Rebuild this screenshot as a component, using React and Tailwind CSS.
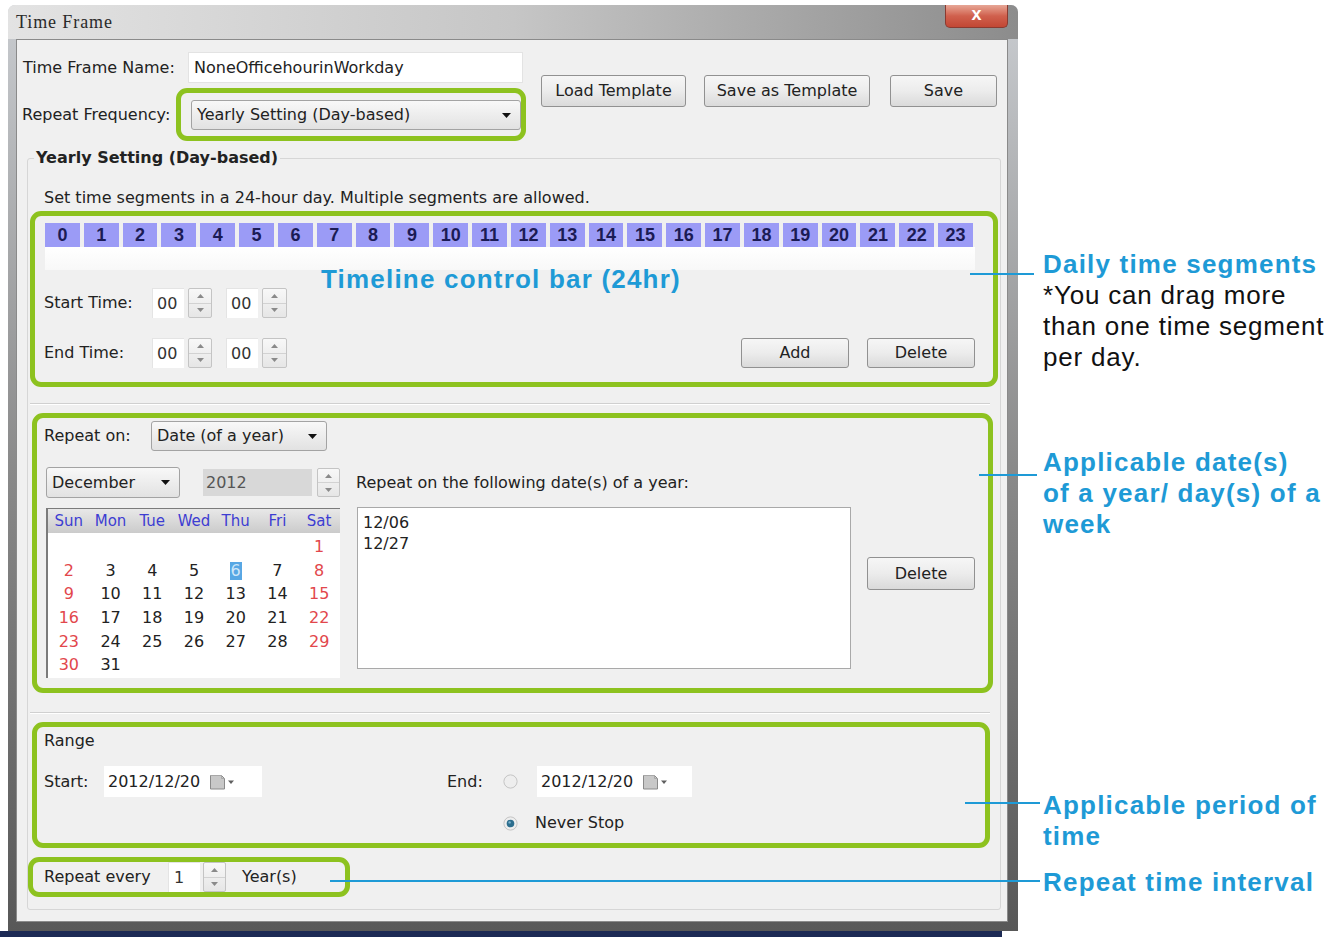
import React from "react";

const ui = "font-['DejaVu_Sans','Liberation_Sans',sans-serif]";
const arial = "font-['Liberation_Sans',Arial,sans-serif]";
const green = "rounded-[11px] border-[5px] border-[#8dc21f]";
const noteBlue = `${arial} text-[26px] font-bold tracking-[1.2px] text-[#1e9ad6]`;
const noteBlack = `${arial} text-[26px] tracking-[0.8px] text-[#111]`;

function Arrow({ up }) {
  return (
    <svg width="7" height="4" viewBox="0 0 7 4">
      <path d={up ? "M0 4L3.5 0L7 4Z" : "M0 0L7 0L3.5 4Z"} fill="#8a8a8a" />
    </svg>
  );
}

function Spinner({ className = "" }) {
  return (
    <div className={`flex flex-col rounded-[2px] border border-[#c4c4c4] bg-linear-to-b from-[#f8f8f8] to-[#e6e6e6] ${className}`}>
      <div className="flex flex-1 items-center justify-center border-b border-[#d2d2d2]">
        <Arrow up />
      </div>
      <div className="flex flex-1 items-center justify-center">
        <Arrow />
      </div>
    </div>
  );
}

function NumBox({ value, className = "" }) {
  return (
    <div className={`flex items-center border-l border-t border-[#e4e4e4] bg-white pl-[4px] text-[#333] ${className}`}>
      {value}
    </div>
  );
}

function Select({ label, className = "" }) {
  return (
    <div
      className={`flex items-center justify-between rounded-[3px] border border-[#a3a3a3] bg-linear-to-b from-[#f8f8f8] to-[#e2e2e2] pl-[5px] pr-[9px] text-[#222] ${className}`}
    >
      <span>{label}</span>
      <svg width="9" height="5" viewBox="0 0 9 5">
        <path d="M0 0H9L4.5 5Z" fill="#111" />
      </svg>
    </div>
  );
}

function Btn({ children, className = "" }) {
  return (
    <button
      type="button"
      className={`flex items-center justify-center rounded-[3px] border border-[#919191] bg-linear-to-b from-[#f6f6f6] via-[#ececec] to-[#dadada] text-[#222] ${className}`}
    >
      {children}
    </button>
  );
}

function Radio({ checked, className = "" }) {
  return (
    <svg className={className} width="15" height="15" viewBox="0 0 15 15">
      <circle cx="7.5" cy="7.5" r="6.6" fill="#eeeeee" stroke="#c4c4c4" />
      {checked && <circle cx="7.5" cy="7.5" r="3.8" fill="#2c6e8e" />}
      {checked && <circle cx="6.6" cy="6.4" r="1.2" fill="#7fb4cf" />}
    </svg>
  );
}

function DateField({ className = "" }) {
  return (
    <div className={`flex h-[31px] items-center bg-white pl-[4px] text-[#222] ${className}`}>
      <span>2012/12/20</span>
      <svg className="ml-[9px]" width="28" height="18" viewBox="0 0 28 18">
        <path d="M1.5 2.5h11l3 3v10.5h-14z" fill="#c8c8c8" stroke="#8a8a8a" />
        <path d="M1.5 2.5h11v3h3" fill="none" stroke="#a8a8a8" />
        <path d="M19 7.5h6l-3 3.5z" fill="#5f5f5f" />
      </svg>
    </div>
  );
}

function TimeRow({ label, children }) {
  return (
    <div className="flex h-[30px] items-center">
      <span className="w-[108px]">{label}</span>
      <NumBox value="00" className="h-[30px] w-[32px]" />
      <Spinner className="ml-[4px] h-[30px] w-[24px]" />
      <NumBox value="00" className="ml-[14px] h-[30px] w-[32px]" />
      <Spinner className="ml-[4px] h-[30px] w-[25px]" />
      {children}
    </div>
  );
}

function Calendar() {
  const names = ["Sun", "Mon", "Tue", "Wed", "Thu", "Fri", "Sat"];
  const cells = [null, null, null, null, null, null];
  for (let d = 1; d <= 31; d++) cells.push(d);
  return (
    <div className="ml-[2px] h-[170px] w-[294px] border-l-2 border-t border-[#7b7b7b] bg-white">
      <div className="grid h-[24px] grid-cols-7 bg-linear-to-b from-[#e8e8e8] to-[#cbcbcb] text-[15px] text-[#3d3dd2]">
        {names.map((n) => (
          <div key={n} className="flex items-center justify-center">
            {n}
          </div>
        ))}
      </div>
      <div className="grid auto-rows-[23.7px] grid-cols-7 pt-[2px]">
        {cells.map((d, i) => {
          const weekend = i % 7 === 0 || i % 7 === 6;
          return (
            <div
              key={i}
              className={`flex items-center justify-center ${weekend ? "text-[#e2474c]" : "text-[#222]"}`}
            >
              {d === 6 ? (
                <span className="bg-[#58a7e4] px-[1px] leading-[18px] text-[#cfe6f8]">6</span>
              ) : (
                d
              )}
            </div>
          );
        })}
      </div>
    </div>
  );
}

function Window() {
  return (
    <div className="ml-[8px] mt-[5px] flex h-[926px] w-[1010px] flex-col rounded-t-[7px] bg-linear-to-b from-[#c9ccd0] via-[#8a8a8a] to-[#585858]">
      <div className="flex h-[34px] shrink-0 items-start justify-between rounded-t-[7px] bg-linear-to-r from-[#e3e3e3] via-[#c6c6c6] to-[#8c8c8c] pl-[8px] pr-[10px]">
        <span className="mt-[7px] font-['Liberation_Serif',serif] text-[18px] leading-[20px] tracking-[0.9px] text-[#2a2a2a]">
          Time Frame
        </span>
        <div className="flex h-[23px] w-[63px] items-center justify-center rounded-b-[5px] border border-t-0 border-[#8a3a30] bg-linear-to-b from-[#e6a696] via-[#d0604d] to-[#c24734] pb-[4px] font-['Liberation_Sans',sans-serif] text-[18px] font-bold leading-none text-white">
          x
        </div>
      </div>
      <div className="flex flex-1 flex-col pb-[9px] pl-[8px] pr-[10px]">
        <div className="flex flex-1 flex-col border border-[#8a8a8a] bg-[#f0f0f0] text-[16px] leading-[20px] text-[#222]">
          {/* name / frequency / template buttons */}
          <div className="flex pl-[5px] pt-[12px]">
            <div className="flex flex-col">
              <div className="flex h-[31px] items-center">
                <span className="w-[166px] pl-[1px]">Time Frame Name:</span>
                <div className="flex h-[31px] w-[335px] items-center border border-[#e3e3e3] bg-white pl-[5px]">
                  NoneOfficehourinWorkday
                </div>
              </div>
              <div className="mt-[5px] flex items-center">
                <span className="w-[154px]">Repeat Frequency:</span>
                <div className={`h-[53px] w-[350px] pl-[10px] pt-[7px] ${green}`}>
                  <Select className="h-[30px] w-[330px]" label="Yearly Setting (Day-based)" />
                </div>
              </div>
            </div>
            <div className="ml-[15px] mt-[23px] flex h-[32px]">
              <Btn className="w-[145px]">Load Template</Btn>
              <Btn className="ml-[18px] w-[166px]">Save as Template</Btn>
              <Btn className="ml-[20px] w-[107px]">Save</Btn>
            </div>
          </div>

          <fieldset className="ml-[10px] mr-[7px] mt-[7px] rounded-[3px] border border-[#d6d6d6] px-[2px] pb-[12px] pt-[20px]">
            <legend className="ml-[4px] px-[2px] text-[16px] font-bold leading-[20px]">Yearly Setting (Day-based)</legend>
            <div className="ml-[14px] h-[20px]">Set time segments in a 24-hour day. Multiple segments are allowed.</div>

            {/* timeline */}
            <div className={`relative mt-[3px] h-[176px] w-[968px] pt-[7px] ${green}`}>
              <div className="ml-[10px] grid h-[24px] w-[928px] grid-cols-[repeat(24,minmax(0,1fr))] gap-x-[4px]">
                {Array.from({ length: 24 }, (_, h) => (
                  <div
                    key={h}
                    className={`flex items-center justify-center bg-[#9b9bf6] ${arial} text-[18px] font-bold leading-none text-[#1b1b55]`}
                  >
                    {h}
                  </div>
                ))}
              </div>
              <div className="ml-[10px] h-[23px] w-[930px] bg-linear-to-b from-white to-[#f8f8f8]" />
              <div className={`absolute left-[286px] top-[48px] leading-[30px] ${noteBlue}`}>Timeline control bar (24hr)</div>
              <div className="ml-[9px] mt-[18px]">
                <TimeRow label="Start Time:" />
              </div>
              <div className="ml-[9px] mt-[20px] pr-[18px]">
                <TimeRow label="End Time:">
                  <Btn className="ml-auto h-[30px] w-[108px]">Add</Btn>
                  <Btn className="ml-[18px] h-[30px] w-[108px]">Delete</Btn>
                </TimeRow>
              </div>
            </div>

            <div className="mt-[16px] w-[960px] border-b border-t border-[#d0d0d0] border-b-white" />

            {/* repeat on */}
            <div className={`ml-[2px] mt-[8px] h-[280px] w-[961px] pl-[7px] pt-[3px] ${green}`}>
              <div className="flex h-[30px] items-center">
                <span className="w-[107px]">Repeat on:</span>
                <Select className="h-[30px] w-[176px]" label="Date (of a year)" />
              </div>
              <div className="mt-[16px] flex h-[31px] items-center">
                <Select className="ml-[2px] h-[31px] w-[134px]" label="December" />
                <div className="ml-[23px] flex h-[27px] w-[109px] items-center bg-[#d8d8d8] pl-[3px] text-[#555]">2012</div>
                <Spinner className="ml-[5px] h-[29px] w-[23px]" />
                <span className="ml-[16px]">Repeat on the following date(s) of a year:</span>
              </div>
              <div className="mt-[10px] flex items-start">
                <Calendar />
                <div className="-mt-[1px] ml-[17px] h-[162px] w-[494px] border border-[#a9a9a9] bg-white pl-[5px] pt-[4px] leading-[21px]">
                  <div>12/06</div>
                  <div>12/27</div>
                </div>
                <Btn className="ml-[16px] mt-[49px] h-[33px] w-[108px]">Delete</Btn>
              </div>
            </div>

            <div className="mt-[19px] w-[960px] border-b border-t border-[#d0d0d0] border-b-white" />

            {/* range */}
            <div className={`ml-[2px] mt-[8px] h-[126px] w-[958px] pl-[7px] pt-[4px] ${green}`}>
              <div className="h-[20px]">Range</div>
              <div className="mt-[15px] flex h-[31px] items-center">
                <span className="w-[60px]">Start:</span>
                <DateField className="w-[158px]" />
                <span className="ml-[185px] w-[56px]">End:</span>
                <Radio />
                <DateField className="ml-[19px] w-[155px]" />
              </div>
              <div className="mt-[16px] flex h-[20px] items-center">
                <Radio checked className="ml-[459px]" />
                <span className="ml-[17px]">Never Stop</span>
              </div>
            </div>

            {/* repeat interval */}
            <div className={`-ml-[2px] mt-[9px] flex h-[40px] w-[322px] items-center pl-[11px] ${green}`}>
              <span className="w-[124px]">Repeat every</span>
              <NumBox value="1" className="h-[30px] w-[32px] pl-[5px]" />
              <Spinner className="ml-[3px] h-[30px] w-[23px]" />
              <span className="ml-[16px]">Year(s)</span>
            </div>
          </fieldset>
        </div>
      </div>
    </div>
  );
}

function Notes() {
  return (
    <div className="flex flex-col whitespace-nowrap pl-[25px] leading-[31px]">
      <div className="mt-[249px]">
        <div className={noteBlue}>Daily time segments</div>
        <div className={noteBlack}>*You can drag more</div>
        <div className={noteBlack}>than one time segment</div>
        <div className={noteBlack}>per day.</div>
      </div>
      <div className="mt-[74px]">
        <div className={noteBlue}>Applicable date(s)</div>
        <div className={noteBlue}>of a year/ day(s) of a</div>
        <div className={noteBlue}>week</div>
      </div>
      <div className="mt-[250px]">
        <div className={noteBlue}>Applicable period of</div>
        <div className={noteBlue}>time</div>
      </div>
      <div className="mt-[15px]">
        <div className={noteBlue}>Repeat time interval</div>
      </div>
    </div>
  );
}

export default function App() {
  return (
    <div className={`relative flex h-[937px] w-[1334px] flex-col overflow-hidden bg-white ${ui}`}>
      <div className="flex h-[931px] shrink-0">
        <Window />
        <Notes />
      </div>
      <div className="h-[6px] w-[1002px] bg-[#1c2a55]" />

      {/* callout leader lines */}
      <div className="absolute left-[970px] top-[273px] h-[2px] w-[64px] bg-[#1e9ad6]" />
      <div className="absolute left-[979px] top-[474px] h-[2px] w-[58px] bg-[#1e9ad6]" />
      <div className="absolute left-[965px] top-[802px] h-[2px] w-[75px] bg-[#1e9ad6]" />
      <div className="absolute left-[330px] top-[880px] h-[2px] w-[710px] bg-[#1e9ad6]" />
    </div>
  );
}
